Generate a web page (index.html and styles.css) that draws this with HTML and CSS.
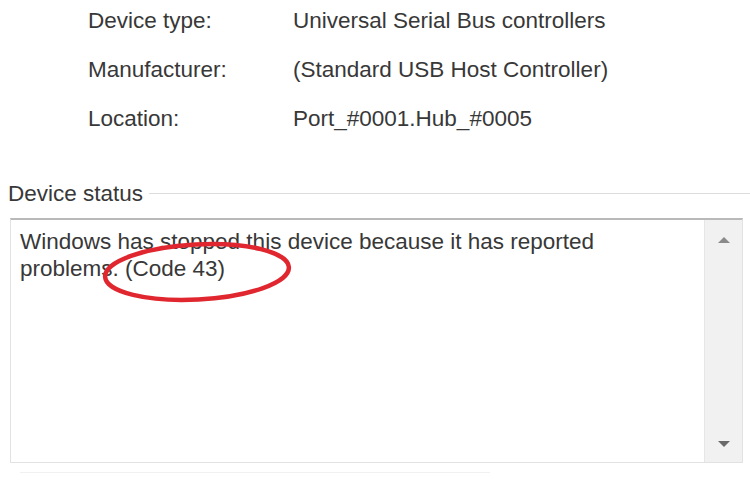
FILE: index.html
```html
<!DOCTYPE html>
<html>
<head>
<meta charset="utf-8">
<link rel="stylesheet" href="styles.css">
</head>
<body>
<div class="props">
  <div class="label">Device type:</div><div class="value">Universal Serial Bus controllers</div>
  <div class="label">Manufacturer:</div><div class="value">(Standard USB Host Controller)</div>
  <div class="label">Location:</div><div class="value">Port_#0001.Hub_#0005</div>
</div>
<div class="group-head">
  <span class="group-title">Device status</span>
  <span class="group-line"></span>
</div>
<div class="status-box">
  <div class="status-text">Windows has stopped this device because it has reported problems. (Code 43)</div>
  <div class="scrollbar">
    <span class="arrow up"></span>
    <span class="arrow down"></span>
  </div>
  <svg class="circle" width="210" height="80" viewBox="0 0 210 80">
    <ellipse cx="103" cy="38" rx="92" ry="27.5" fill="none" stroke="#e0262e" stroke-width="4.5" transform="rotate(-3 103 38)"/>
  </svg>
</div>
<div class="footer-line"></div>
</body>
</html>
```

FILE: styles.css
```css
html, body {
  margin: 0;
  padding: 0;
  background: #ffffff;
}
body {
  font-family: "Liberation Sans", Arial, sans-serif;
  font-size: 22.5px;
  color: #383838;
  width: 750px;
  height: 500px;
  overflow: hidden;
}
.props {
  display: grid;
  grid-template-columns: 205px auto;
  row-gap: 7px;
  padding-left: 88px;
  line-height: 42px;
}
.group-head {
  display: flex;
  align-items: center;
  margin-top: 39px;
  padding-left: 8px;
  height: 28px;
}
.group-title {
  line-height: 28px;
  margin-top: 2px;
}
.group-line {
  flex: 1;
  border-top: 1px solid #dcdcdc;
  margin-left: 6px;
}
.status-box {
  position: relative;
  margin-top: 11px;
  margin-left: 10px;
  width: 733px;
  height: 245px;
  box-sizing: border-box;
  border: 1px solid #e2e2e2;
  border-top: 2px solid #b9b9b9;
  display: flex;
}
.status-text {
  flex: 1;
  padding: 8px 40px 0 9px;
  line-height: 27px;
}
.scrollbar {
  width: 37px;
  background: #f1f1f1;
  border-left: 1px solid #e6e6e6;
  display: flex;
  flex-direction: column;
  justify-content: space-between;
  align-items: center;
  padding: 17px 0 15px;
}
.arrow {
  width: 0;
  height: 0;
  border-left: 6px solid transparent;
  border-right: 6px solid transparent;
}
.arrow.up {
  border-bottom: 6px solid #8a8a8a;
}
.arrow.down {
  border-top: 6px solid #6a6a6a;
}
.circle {
  position: absolute;
  left: 83px;
  top: 14px;
}
.footer-line {
  margin-top: 9px;
  margin-left: 20px;
  width: 470px;
  border-top: 1px solid #f1f1f1;
}
```
